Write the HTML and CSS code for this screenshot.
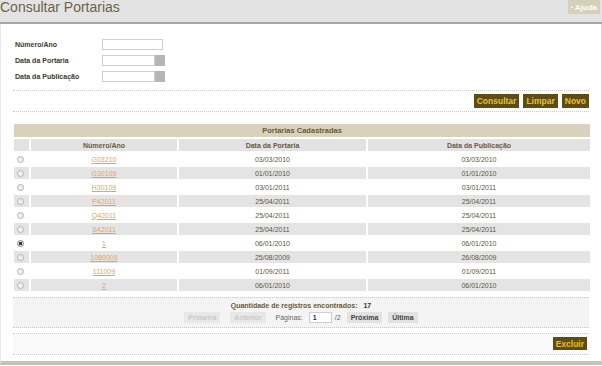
FILE: index.html
```html
<!DOCTYPE html>
<html>
<head>
  <title>Consultar Portarias</title>
  <link rel="stylesheet" href="styles.css">
</head>
<body>
  <div class="header">
    <h1 class="title">Consultar Portarias</h1>
    <a class="help" href="#"><span class="help-dot">•</span> Ajuda</a>
  </div>

  <div class="page">
    <div class="filters">
      <div class="field">
        <label>Número/Ano</label>
        <input type="text" class="text-input">
      </div>
      <div class="field">
        <label>Data da Portaria</label>
        <input type="text" class="date-input"><button class="date-btn">...</button>
      </div>
      <div class="field">
        <label>Data da Publicação</label>
        <input type="text" class="date-input"><button class="date-btn">...</button>
      </div>
    </div>

    <div class="actions">
      <button class="action">Consultar</button>
      <button class="action">Limpar</button>
      <button class="action">Novo</button>
    </div>

    <table class="results">
      <colgroup>
        <col class="col-radio">
        <col class="col-num">
        <col class="col-port">
        <col>
      </colgroup>
      <thead>
        <tr><th class="caption" colspan="4">Portarias Cadastradas</th></tr>
        <tr>
          <th></th>
          <th>Número/Ano</th>
          <th>Data da Portaria</th>
          <th>Data da Publicação</th>
        </tr>
      </thead>
      <tbody>
        <tr><td><input type="radio" name="sel"></td><td><a href="#">G03210</a></td><td>03/03/2010</td><td>03/03/2010</td></tr>
        <tr><td><input type="radio" name="sel"></td><td><a href="#">G30109</a></td><td>01/01/2010</td><td>01/01/2010</td></tr>
        <tr><td><input type="radio" name="sel"></td><td><a href="#">H30109</a></td><td>03/01/2011</td><td>03/01/2011</td></tr>
        <tr><td><input type="radio" name="sel"></td><td><a href="#">P42011</a></td><td>25/04/2011</td><td>25/04/2011</td></tr>
        <tr><td><input type="radio" name="sel"></td><td><a href="#">Q42011</a></td><td>25/04/2011</td><td>25/04/2011</td></tr>
        <tr><td><input type="radio" name="sel"></td><td><a href="#">S42011</a></td><td>25/04/2011</td><td>25/04/2011</td></tr>
        <tr><td><input type="radio" name="sel" checked></td><td><a href="#">1</a></td><td>06/01/2010</td><td>06/01/2010</td></tr>
        <tr><td><input type="radio" name="sel"></td><td><a href="#">1080009</a></td><td>25/08/2009</td><td>26/08/2009</td></tr>
        <tr><td><input type="radio" name="sel"></td><td><a href="#">111009</a></td><td>01/09/2011</td><td>01/09/2011</td></tr>
        <tr><td><input type="radio" name="sel"></td><td><a href="#">2</a></td><td>06/01/2010</td><td>06/01/2010</td></tr>
      </tbody>
    </table>

    <div class="pager">
      <div class="count">Quantidade de registros encontrados: <span class="count-num">17</span></div>
      <div class="pager-row">
        <button class="page-btn disabled">Primeira</button>
        <button class="page-btn disabled">Anterior</button>
        <span class="pages-label">Páginas:</span>
        <input type="text" class="page-input" value="1">
        <span class="pages-total">/2</span>
        <button class="page-btn">Próxima</button>
        <button class="page-btn">Última</button>
      </div>
    </div>

    <div class="footer-bar">
      <button class="action">Excluir</button>
    </div>
  </div>
</body>
</html>
```

FILE: styles.css
```css
body {
  margin: 0;
  padding: 0;
  font-family: 'Liberation Sans', Arial, sans-serif;
  background: #fff;
}

.header {
  height: 22px;
  background: #e3e3e3;
  border-bottom: 2px solid #aba799;
  display: flex;
  justify-content: space-between;
  align-items: flex-start;
}

.title {
  margin: 0;
  font-size: 14px;
  font-weight: normal;
  line-height: 14px;
  color: #6b6448;
}

.help {
  margin-right: 2px;
  height: 14px;
  padding: 0 3px;
  background: #d6d0b8;
  color: #fff;
  font-size: 8px;
  font-weight: bold;
  line-height: 14px;
  text-decoration: none;
}

.help-dot {
  font-size: 6px;
  vertical-align: 1px;
}

.page {
  height: 325px;
  padding: 12px 12px 0 12px;
  border-left: 1px solid #e8e8e8;
  border-right: 1px solid #d8d8d8;
  border-bottom: 4px solid #c6c2b6;
  font-size: 7px;
}

.filters {
  padding: 0 0 6px 2px;
  border-bottom: 1px dotted #c8c8c8;
}

.field {
  display: flex;
  align-items: center;
  height: 16px;
}

.field label {
  width: 87px;
  font-weight: bold;
  color: #3f3a2c;
}

.text-input,
.date-input {
  box-sizing: border-box;
  height: 11px;
  padding: 0;
  border: 1px solid #cfcfcf;
  background: #fff;
}

.text-input {
  width: 61px;
}

.date-input {
  width: 53px;
}

.date-btn {
  width: 10px;
  height: 11px;
  padding: 0;
  border: none;
  background: #b6b6b6;
  color: #888;
  font-size: 5px;
  line-height: 14px;
}

.actions {
  display: flex;
  justify-content: flex-end;
  gap: 4px;
  padding: 3px 0 3px 0;
  border-bottom: 1px dotted #c8c8c8;
}

.action {
  height: 14px;
  padding: 0 3px;
  border: none;
  background: #5f4c14;
  color: #e7c324;
  font-family: 'Liberation Sans', Arial, sans-serif;
  font-size: 8.5px;
  font-weight: bold;
}

.results {
  width: 580px;
  margin: 10px 0 0 -1px;
  border-spacing: 2px;
  table-layout: fixed;
  font-size: 7px;
}

.col-radio {
  width: 15px;
}

.col-num {
  width: 146px;
}

.col-port {
  width: 187px;
}

.results th {
  height: 12px;
  padding: 0;
  background: #e2e2e2;
  color: #6a5c3c;
  font-weight: bold;
}

.results th.caption {
  height: 13px;
  background: #d8d2bc;
  color: #6a5a34;
  font-size: 7.5px;
}

.results td {
  height: 12px;
  padding: 0;
  text-align: center;
  color: #5e5644;
}

.results td:first-child {
  text-align: left;
  padding-left: 3px;
}

.results tbody tr:nth-child(even) td {
  background: #e4e4e4;
}

.results a {
  color: #f0a050;
}

.results input[type="radio"] {
  appearance: none;
  display: block;
  box-sizing: border-box;
  width: 7px;
  height: 7px;
  margin: 0;
  border: 1px solid #b4b4b4;
  border-radius: 50%;
  background: #efefef;
}

.results input[type="radio"]:checked {
  background: radial-gradient(circle, #3a3a3a 0, #3a3a3a 1.5px, #dcdcdc 2px);
  border-color: #8a8a8a;
}

.pager {
  margin-top: 4px;
  padding: 3px 0 4px 0;
  background: #f4f4f4;
  border-top: 1px dotted #c8c8c8;
  border-bottom: 1px dotted #c8c8c8;
  text-align: center;
}

.count {
  font-weight: bold;
  color: #6a5a34;
  line-height: 9px;
}

.count-num {
  margin-left: 4px;
  color: #3a3a2a;
}

.pager-row {
  display: flex;
  justify-content: center;
  align-items: center;
  gap: 6px;
  margin-top: 2px;
}

.page-btn {
  height: 11px;
  padding: 0 4px;
  border: none;
  background: #e2e2e2;
  color: #444;
  font-family: 'Liberation Sans', Arial, sans-serif;
  font-size: 7px;
  font-weight: bold;
}

.page-btn.disabled {
  background: #e8e8e8;
  color: #c8c8c8;
  margin-right: 4px;
}

.pages-label,
.pages-total {
  color: #666;
}

.page-input {
  box-sizing: border-box;
  width: 23px;
  height: 11px;
  padding: 0 3px;
  border: 1px solid #cfcfcf;
  font-size: 7px;
  font-weight: bold;
  color: #333;
}

.pages-total {
  margin-left: -3px;
}

.footer-bar {
  display: flex;
  justify-content: flex-end;
  margin-top: 5px;
  padding: 3px 2px 4px 0;
  border-top: 1px dotted #c8c8c8;
  border-bottom: 1px dotted #c8c8c8;
  background: #fafafa;
}

.footer-bar .action {
  height: 13px;
}
```
